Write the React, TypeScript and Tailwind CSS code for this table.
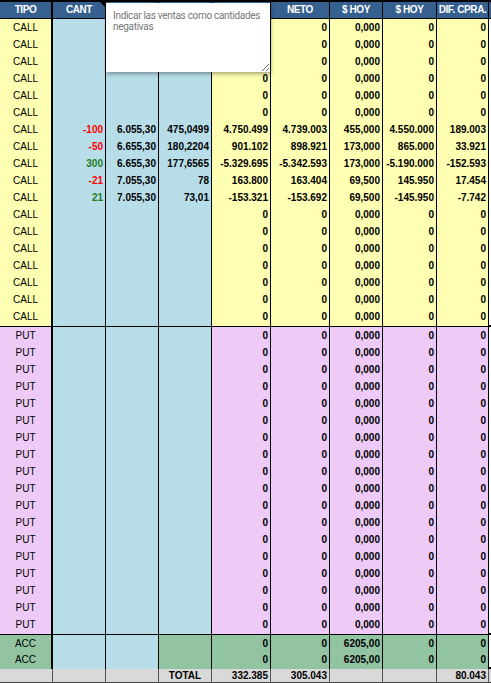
import React from "react";

const grid = "grid grid-cols-[53px_53px_53px_53px_59px_59px_53px_54px_52px]";
const font = { fontFamily: '"Liberation Sans", Arial, sans-serif' };

const yellow = "bg-[#ffffb3]";
const blue = "bg-[#b7dde8]";
const lilac = "bg-[#eecbf6]";
const green = "bg-[#93c4a2]";
const gray = "bg-[#d9d9d9]";

type Section = "call" | "put" | "acc";

const bgs: Record<Section, string[]> = {
  call: [yellow, blue, blue, blue, yellow, yellow, yellow, yellow, yellow],
  put: [lilac, blue, blue, blue, lilac, lilac, lilac, lilac, lilac],
  acc: [green, blue, blue, green, green, green, green, green, green],
};

type Row = { v: string[]; q?: "red" | "green" };

const zero = ["0", "0", "0,000", "0", "0"];
const empty = (t: string): Row => ({ v: [t, "", "", "", ...zero] });

const callRows: Row[] = [
  ...Array.from({ length: 6 }, () => empty("CALL")),
  { v: ["CALL", "-100", "6.055,30", "475,0499", "4.750.499", "4.739.003", "455,000", "4.550.000", "189.003"], q: "red" },
  { v: ["CALL", "-50", "6.655,30", "180,2204", "901.102", "898.921", "173,000", "865.000", "33.921"], q: "red" },
  { v: ["CALL", "300", "6.655,30", "177,6565", "-5.329.695", "-5.342.593", "173,000", "-5.190.000", "-152.593"], q: "green" },
  { v: ["CALL", "-21", "7.055,30", "78", "163.800", "163.404", "69,500", "145.950", "17.454"], q: "red" },
  { v: ["CALL", "21", "7.055,30", "73,01", "-153.321", "-153.692", "69,500", "-145.950", "-7.742"], q: "green" },
  ...Array.from({ length: 7 }, () => empty("CALL")),
];

const putRows: Row[] = Array.from({ length: 18 }, () => empty("PUT"));

const accRows: Row[] = Array.from({ length: 2 }, () => ({
  v: ["ACC", "", "", "", "0", "0", "6205,00", "0", "0"],
}));

function DataRow({ row, section, h }: { row: Row; section: Section; h: string }) {
  return (
    <div className={grid + " " + h}>
      {row.v.map((v, i) => {
        const bg = bgs[section][i];
        if (i === 0) {
          return (
            <div key={i} className={bg + " border-r-2 border-black text-center text-[10px] text-black leading-[18px]"}>
              {v}
            </div>
          );
        }
        let color = "text-black";
        if (i === 1 && row.q === "red") color = "text-[#ff0000]";
        if (i === 1 && row.q === "green") color = "text-[#1c7c1c]";
        return (
          <div key={i} className={bg + " border-r border-black text-right pr-[2px] font-bold text-[10px] leading-[18px] " + color}>
            {v}
          </div>
        );
      })}
    </div>
  );
}

const headers = ["TIPO", "CANT", "", "", "", "NETO", "$ HOY", "$ HOY", "DIF. CPRA."];

export default function App() {
  return (
    <div className="relative w-[491px] h-[683px] bg-white overflow-hidden" style={font}>
      <div className={grid + " h-[19px] border-t-2 border-b border-black bg-[#35608f]"}>
        {headers.map((h, i) => (
          <div
            key={i}
            className={
              (i === 0 ? "border-r-2 " : "border-r ") +
              "relative border-black text-center text-white font-bold text-[10px] tracking-[-0.4px] leading-[16px] whitespace-nowrap"
            }
          >
            {h}
            {i === 1 && (
              <span className="absolute right-0 top-0 w-0 h-0 border-l-[5px] border-l-transparent border-t-[5px] border-t-black" />
            )}
          </div>
        ))}
      </div>

      <div>
        {callRows.map((r, i) => (
          <DataRow key={i} row={r} section="call" h="h-[17px]" />
        ))}
      </div>
      <div className="border-t-2 border-black">
        {putRows.map((r, i) => (
          <DataRow key={i} row={r} section="put" h="h-[17px]" />
        ))}
      </div>
      <div className="border-t-2 border-black">
        {accRows.map((r, i) => (
          <DataRow key={i} row={r} section="acc" h="h-[16px]" />
        ))}
      </div>
      <div className={grid + " h-[16px] border-t-2 border-black border-b border-b-[#444] " + gray}>
        {["", "", "", "TOTAL", "332.385", "305.043", "", "", "80.043"].map((v, i) => (
          <div
            key={i}
            className={
              "border-r border-[#555] font-bold text-[10px] text-black leading-[14px] " +
              (i === 3 ? "text-center" : "text-right pr-[2px]")
            }
          >
            {v}
          </div>
        ))}
      </div>

      <textarea
        readOnly
        value="Indicar las ventas como cantidades negativas"
        className="absolute left-[106px] top-[3px] w-[164px] h-[69px] bg-white border-0 outline-none pt-[7px] pl-[7px] pr-0 text-[10px] tracking-[-0.3px] leading-[11px] text-[#777] shadow-[1px_2px_4px_rgba(0,0,0,0.35)]"
        style={{ fontFamily: 'Roboto, "Liberation Sans", sans-serif' }}
      />
    </div>
  );
}
